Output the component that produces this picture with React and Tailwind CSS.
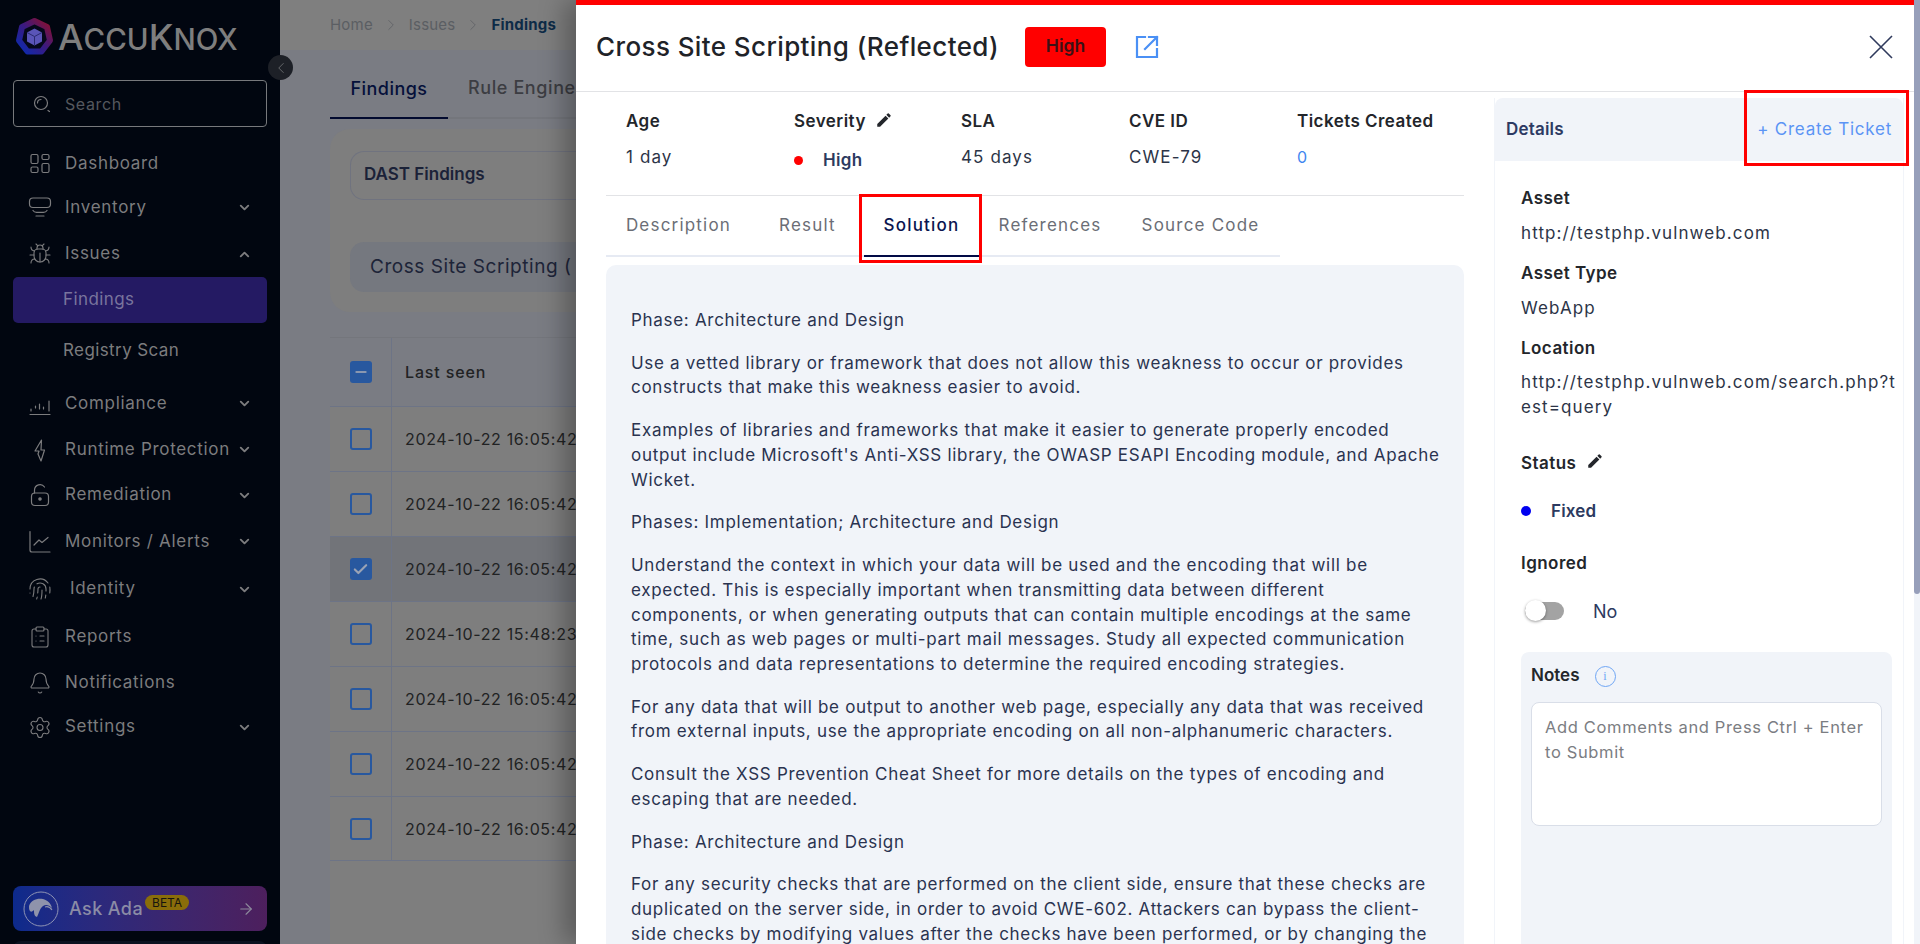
import React from "react";
import { Bug, Fingerprint, Bell, Settings, ClipboardList, ChevronDown, ChevronUp, ChevronLeft, ChevronRight, ArrowRight, Check, Minus } from "lucide-react";

const I = ({ children }) => (
  <svg width="24" height="24" viewBox="0 0 24 24" fill="none" stroke="currentColor" strokeWidth="1.2" strokeLinecap="round" strokeLinejoin="round">{children}</svg>
);
const DashIcon = () => <I><rect x="3" y="2.5" width="7" height="9" rx="1.5"/><rect x="14" y="2.5" width="7" height="5" rx="1.5"/><rect x="3" y="15" width="7" height="5.5" rx="1.5"/><rect x="14" y="11.5" width="7" height="9" rx="1.5"/></I>;
const InvIcon = () => <I><rect x="1.5" y="2" width="21" height="9.5" rx="3.5"/><path d="M5 14.5c.8 1.3 2 1.8 3.5 1.8h7c1.5 0 2.7-.5 3.5-1.8M8 20h8"/></I>;
const CompIcon = () => <I><path d="M2 22.5h20M3 17v2M7.5 14v2M11.5 12v5M15.5 15v2M21 9v10"/></I>;
const BoltIcon = () => <I><path d="M13.5 2 7 13h4l-1 3 3 7 3.5-11H13z"/></I>;
const LockIcon = () => <I><rect x="3.5" y="10" width="17" height="12.5" rx="3.5"/><path d="M6.5 10V7a5.5 5.5 0 0 1 10-3"/><circle cx="12" cy="16" r="1.2" fill="currentColor"/></I>;
const ChartIcon = () => <I><path d="M2 1.5V20a2 2 0 0 0 2 2h18M6 15l5-5 3 2.5 6-5"/></I>;
const EditIcon = ({ size = 18, className = "" }) => (
  <svg width={size} height={size} viewBox="0 0 24 24" fill="currentColor" className={className}><path d="M3 17.25V21h3.75L17.81 9.94l-3.75-3.75L3 17.25zM20.71 7.04c.39-.39.39-1.02 0-1.41l-2.34-2.34a.9959.9959 0 0 0-1.41 0l-1.83 1.83 3.75 3.75 1.83-1.83z" /></svg>
);
const Fold = ({ up }) => up
  ? <ChevronUp size={15} strokeWidth={3} />
  : <ChevronDown size={15} strokeWidth={3} />;

const nav = [
  { t: "Dashboard", icon: <DashIcon />, h: "h-[41px]" },
  { t: "Inventory", icon: <InvIcon />, chev: 1, h: "h-[47px]" },
  { t: "Issues", icon: <Bug size={24} strokeWidth={1.1} />, chev: 2, h: "h-[46px]" },
];
const nav2 = [
  { t: "Compliance", icon: <CompIcon />, chev: 1, h: "h-[47px]" },
  { t: "Runtime Protection", icon: <BoltIcon />, chev: 1, h: "h-[45px]" },
  { t: "Remediation", icon: <LockIcon />, chev: 1, h: "h-[46px]" },
  { t: "Monitors / Alerts", icon: <ChartIcon />, chev: 1, h: "h-[47px]" },
  { t: "Identity", icon: <Fingerprint size={26} strokeWidth={1.1} />, chev: 1, h: "h-[48px]", shift: true },
  { t: "Reports", icon: <ClipboardList size={24} strokeWidth={1.1} />, h: "h-[48px]" },
  { t: "Notifications", icon: <Bell size={24} strokeWidth={1.1} />, h: "h-[44px]" },
  { t: "Settings", icon: <Settings size={25} strokeWidth={1.1} />, chev: 1, h: "h-[44px]" },
];

const NavRow = ({ it }) => (
  <div className={`${it.h} flex items-center pl-[28px] pr-[28px] text-[#7c7c7e]`}>
    <span className="w-[24px] flex justify-center shrink-0">{it.icon}</span>
    <span className={`${it.shift ? "ml-[18px]" : "ml-[13px]"} text-[17px] tracking-[0.7px] flex-1 whitespace-nowrap`}>{it.t}</span>
    {it.chev ? <Fold up={it.chev === 2} /> : null}
  </div>
);

const rows = ["2024-10-22 16:05:42", "2024-10-22 16:05:42", "2024-10-22 16:05:42", "2024-10-22 15:48:23", "2024-10-22 16:05:42", "2024-10-22 16:05:42", "2024-10-22 16:05:42"];

const paras = [
  ["Phase: Architecture and Design"],
  ["Use a vetted library or framework that does not allow this weakness to occur or provides", "constructs that make this weakness easier to avoid."],
  ["Examples of libraries and frameworks that make it easier to generate properly encoded", "output include Microsoft's Anti-XSS library, the OWASP ESAPI Encoding module, and Apache", "Wicket."],
  ["Phases: Implementation; Architecture and Design"],
  ["Understand the context in which your data will be used and the encoding that will be", "expected. This is especially important when transmitting data between different", "components, or when generating outputs that can contain multiple encodings at the same", "time, such as web pages or multi-part mail messages. Study all expected communication", "protocols and data representations to determine the required encoding strategies."],
  ["For any data that will be output to another web page, especially any data that was received", "from external inputs, use the appropriate encoding on all non-alphanumeric characters."],
  ["Consult the XSS Prevention Cheat Sheet for more details on the types of encoding and", "escaping that are needed."],
  ["Phase: Architecture and Design"],
  ["For any security checks that are performed on the client side, ensure that these checks are", "duplicated on the server side, in order to avoid CWE-602. Attackers can bypass the client-", "side checks by modifying values after the checks have been performed, or by changing the"],
];

const Label = ({ children }) => <div className="text-[17px] font-semibold text-[#23262b] tracking-[0.45px] leading-[24px] whitespace-nowrap">{children}</div>;
const Value = ({ children }) => <div className="text-[17px] text-[#2c3447] tracking-[1.1px] leading-[25px] whitespace-nowrap">{children}</div>;

const tabs = [
  { t: "Description", w: "w-[145px]" },
  { t: "Result", w: "w-[113px]" },
  { t: "Solution", w: "w-[115px]", on: true },
  { t: "References", w: "w-[142px]" },
  { t: "Source Code", w: "w-[159px]" },
];

export default function App() {
  return (
    <div className="relative flex h-[944px] w-full overflow-hidden bg-[#7a7c83] font-['Inter','Liberation_Sans',sans-serif]">
      {/* Sidebar */}
      <aside className="w-[280px] shrink-0 h-full bg-[#010610] flex flex-col relative">
        <div className="h-[80px] flex items-center pl-[15px] pb-[6px]">
          <svg width="39" height="40" viewBox="0 0 39 40">
            <defs>
              <linearGradient id="ring" x1="0" y1="1" x2="1" y2="0">
                <stop offset="0" stopColor="#0b2bb0" />
                <stop offset="0.5" stopColor="#3a1a80" />
                <stop offset="1" stopColor="#8f0f2a" />
              </linearGradient>
            </defs>
            <path d="M19.5 4 32 10l3 13.5-8.5 11h-14L4 23.5 7 10z" fill="#05081a" stroke="url(#ring)" strokeWidth="6" strokeLinejoin="round" />
            <path d="M19.5 11.5 27 15.5v9l-7.5 4-7.5-4v-9z" fill="#5a55b8" />
            <path d="M12 15.5l7.5 4 7.5-4M19.5 19.5v9" stroke="#2a2a70" strokeWidth="1" fill="none" />
          </svg>
          <span className="ml-[4px] text-[#7e7e7e] font-medium leading-none whitespace-nowrap">
            <span className="text-[36px]">A</span><span className="text-[29.5px]">CCU</span><span className="text-[36px]">K</span><span className="text-[29.5px]">NOX</span>
          </span>
        </div>
        <div className="mx-[13px] h-[47px] shrink-0 rounded-[4px] border border-[#77797c] flex items-center pl-[18px] text-[#55585e]">
          <svg width="20" height="20" viewBox="0 0 20 20" fill="none" stroke="#7c7c7e" strokeWidth="1.2" strokeLinecap="round"><circle cx="9" cy="9" r="6.5"/><path d="M5.5 9a3.5 3.5 0 0 1 3.5-3.5M16 16.5l1.5 1"/></svg>
          <span className="ml-[13px] text-[16px] tracking-[0.6px]">Search</span>
        </div>
        <div className="mt-[16px]">
          {nav.map((it) => <NavRow key={it.t} it={it} />)}
          <div className="mx-[13px] h-[46px] rounded-[5px] bg-[#241a63] flex items-center pl-[50px] text-[17px] tracking-[0.4px] text-[#79749d]">Findings</div>
          <div className="h-[55px] flex items-center pl-[63px] text-[17px] tracking-[0.4px] text-[#7c7c7e]">Registry Scan</div>
          <div className="mt-[2px]">
            {nav2.map((it) => <NavRow key={it.t} it={it} />)}
          </div>
        </div>
        <div className="mt-auto mb-[-17px]">
          <div className="mx-[13px] h-[45px] rounded-[8px] bg-gradient-to-r from-[#0c2a8c] to-[#4d1f5d] flex items-center pl-[10px] pr-[12px]">
            <svg width="36" height="36" viewBox="0 0 36 36" fill="none">
              <circle cx="18" cy="18" r="17" stroke="#8e93b4" strokeWidth="1" />
              <path d="M6 15c2-6 8-8 14-7 4 1 8 4 9 9-3-3-6-4-9-2-3 2-4 7-6 11-3-1-3-4-3-7-2 2-3 2-4 1-1-1-1-3-1-5z" fill="#8f93ab" />
              <path d="M22 16c3-1 5 0 7 3" stroke="#8f93ab" strokeWidth="1.2" />
            </svg>
            <span className="ml-[10px] text-[18px] font-medium tracking-[0.4px] text-[#8b8ca6] whitespace-nowrap">Ask Ada</span>
            <span className="ml-[2px] mb-[13px] h-[15px] px-[7px] rounded-full bg-[#8a6d0a] text-[#17150f] text-[12px] leading-[15px] whitespace-nowrap">BETA</span>
            <span className="ml-auto text-[#8d8a9c]"><ArrowRight size={18} strokeWidth={1.5} /></span>
          </div>
          <div className="mx-[13px] mt-[10px] h-[20px] rounded-[8px] bg-[#0b1220]" />
        </div>
        <div className="absolute left-[268px] top-[55px] w-[25px] h-[25px] rounded-full bg-[#1d2027] flex items-center justify-center text-[#6c6e72] z-10">
          <ChevronLeft size={18} strokeWidth={1.2} />
        </div>
      </aside>

      {/* Page behind the drawer */}
      <main className="flex-1 min-w-0 h-full flex flex-col">
        <div className="h-[50px] shrink-0 bg-[#7f7f7f] pl-[50px] flex items-center gap-[9px] text-[15px] tracking-[0.2px] text-[#5b5e63] whitespace-nowrap">
          <span>Home</span><ChevronRight size={18} strokeWidth={1} />
          <span>Issues</span><ChevronRight size={18} strokeWidth={1} />
          <span className="font-bold text-[#0d2b47] tracking-[0.2px]">Findings</span>
        </div>
        <div className="pl-[50px] flex-1 flex flex-col min-h-0">
          <div className="h-[69px] shrink-0 flex items-end border-b-[2px] border-[#74767c] whitespace-nowrap">
            <div className="w-[118px] h-[69px] mb-[-2px] border-b-[2px] border-[#020a2e] flex items-center justify-center text-[18px] font-medium tracking-[0.45px] text-[#05103a] pt-[10px]">Findings</div>
            <div className="ml-[20px] h-[69px] flex items-center text-[18px] font-medium tracking-[0.6px] text-[#3c3d42] pt-[10px]">Rule Engine</div>
          </div>
          <div className="mt-[10px] h-[183px] shrink-0 bg-[#7e7e7e] rounded-l-[20px] pl-[20px] pt-[22px]">
            <div className="h-[49px] rounded-l-[14px] border border-r-0 border-[#70737f] flex items-center pl-[13px] pb-[1px] text-[17px] font-semibold text-[#1b2238] whitespace-nowrap">DAST Findings</div>
            <div className="mt-[42px] h-[50px] rounded-l-[14px] bg-[#75787f] flex items-center pl-[20px] text-[19px] tracking-[0.55px] text-[#1d2438] whitespace-nowrap">Cross Site Scripting (</div>
          </div>
          <div className="mt-[25px] flex-1 bg-[#7e7e7e] text-[16px] text-[#212223] whitespace-nowrap">
            <div className="h-[69px] bg-[#7a7c83] border-t border-[#74767c] flex">
              <div className="w-[62px] border-r border-[#6d7486] flex items-center justify-center">
                <span className="w-[22px] h-[22px] rounded-[3px] bg-[#28589f] flex items-center justify-center text-[#8a97b0]"><Minus size={16} strokeWidth={3} /></span>
              </div>
              <div className="pl-[13px] flex items-center font-medium tracking-[0.85px]">Last seen</div>
            </div>
            {rows.map((r, i) => (
              <div key={i} className={`h-[65px] flex border-t border-[#6d7486] ${i === 2 ? "bg-[#727479]" : ""} ${i === 6 ? "border-b" : ""}`}>
                <div className="w-[62px] border-r border-[#6d7486] flex items-center justify-center">
                  {i === 2
                    ? <span className="w-[22px] h-[22px] rounded-[3px] bg-[#28589f] flex items-center justify-center text-[#9aa3b5]"><Check size={17} strokeWidth={3} /></span>
                    : <span className="w-[22px] h-[22px] rounded-[3px] border-[2px] border-[#28589f]" />}
                </div>
                <div className="pl-[13px] flex items-center tracking-[0.65px]">{r}</div>
              </div>
            ))}
          </div>
        </div>
      </main>

      {/* Drawer */}
      <section className="absolute left-[576px] top-0 w-[1344px] h-[944px] bg-white flex shadow-[-12px_0_24px_rgba(0,0,0,0.28)] z-20 text-[#2c3447]">
        <div className="w-[1338px] flex flex-col h-full">
          <div className="h-[5px] shrink-0 bg-[#ff0000]" />
          <header className="h-[87px] shrink-0 border-b border-[#e2e3e6] flex items-center pl-[20px] pr-[21px] pb-[3px]">
            <h1 className="w-[429px] text-[26px] font-medium tracking-[0.4px] text-[#1f2328] whitespace-nowrap">Cross Site Scripting (Reflected)</h1>
            <span className="w-[81px] h-[40px] rounded-[4px] bg-[#ff0000] flex items-center justify-center text-[17.5px] font-semibold text-[#3a1116]">High</span>
            <span className="ml-[29px] text-[#4a90f5]">
              <svg width="24" height="24" viewBox="0 0 24 24" fill="none" stroke="currentColor" strokeWidth="2.2" strokeLinecap="square"><path d="M10 2H2v20h20v-8M22 2 10 14M14 2h8v8" /></svg>
            </span>
            <span className="ml-auto text-[#2f3a5c]">
              <svg width="24" height="24" viewBox="0 0 24 24" fill="none" stroke="currentColor" strokeWidth="1.6"><path d="M1 1l22 22M23 1 1 23" /></svg>
            </span>
          </header>
          <div className="flex flex-1 min-h-0 pl-[30px]">
            <div className="w-[858px] shrink-0 flex flex-col min-h-0">
              <div className="h-[104px] shrink-0 border-b border-[#e2e3e6] pl-[20px] pt-[17px] flex">
                <div className="w-[168px]"><Label>Age</Label><div className="mt-[12px]"><Value>1 day</Value></div></div>
                <div className="w-[167px]">
                  <div className="flex items-center gap-[9px]"><Label>Severity</Label><EditIcon className="text-[#23262b] mb-[3px]" /></div>
                  <div className="mt-[15px] flex items-center">
                    <span className="w-[9px] h-[9px] rounded-full bg-[#ff0000]" />
                    <span className="ml-[20px] text-[17px] font-semibold tracking-[0.3px] leading-[24px] text-[#2c3a60]">High</span>
                  </div>
                </div>
                <div className="w-[168px]"><Label>SLA</Label><div className="mt-[12px]"><Value>45 days</Value></div></div>
                <div className="w-[168px]"><Label>CVE ID</Label><div className="mt-[12px]"><Value>CWE-79</Value></div></div>
                <div><Label>Tickets Created</Label><div className="mt-[12px] text-[16px] leading-[24px] text-[#3f86f0]">0</div></div>
              </div>
              <div className="h-[61px] shrink-0 w-[674px] flex border-b-[2px] border-[#e6eaf3]">
                {tabs.map((t) => (
                  <div key={t.t} className={`${t.w} relative flex items-center justify-center pt-[1px] text-[17px] tracking-[1.2px] whitespace-nowrap ${t.on ? "text-[#0b1550] font-medium" : "text-[#6b6e76]"}`}>
                    {t.t}
                    {t.on && <span className="absolute left-0 right-0 bottom-[-2px] h-[2px] bg-[#020a46]" />}
                    {t.on && <span className="absolute left-[-5px] right-[-3px] top-[-2px] bottom-[-8px] border-[3px] border-[#ff0000]" />}
                  </div>
                ))}
              </div>
              <div className="mt-[8px] flex-1 min-h-0 overflow-hidden rounded-t-[10px] bg-[#f1f4f9] pl-[25px] pt-[43px] text-[17px] leading-[24.6px] tracking-[0.7px] text-[#2a3350]">
                {paras.map((p, i) => (
                  <p key={i} className="mb-[18.3px] whitespace-nowrap">
                    {p.map((l, j) => <span key={j} className="block">{l}</span>)}
                  </p>
                ))}
              </div>
            </div>
            <div className="ml-[30px] w-[410px] shrink-0 flex flex-col relative min-h-0 mt-[6px] border-x border-[#f1f4f9]">
              <div className="h-[63px] shrink-0 rounded-t-[8px] bg-[#f1f4f9] flex items-center justify-between pl-[11px] pr-[11px]">
                <span className="text-[17px] font-semibold tracking-[0.2px] text-[#2d3a63]">Details</span>
                <span className="text-[17px] tracking-[0.75px] text-[#5b94f5] whitespace-nowrap">+ Create Ticket</span>
              </div>
              <span className="absolute left-[249px] top-[-8px] w-[165px] h-[76px] border-[3px] border-[#ff0000]" />
              <div className="pl-[26px] pr-[11px] pt-[25px] flex-1 min-h-0 flex flex-col">
                <Label>Asset</Label>
                <div className="mt-[11px]"><Value>http://testphp.vulnweb.com</Value></div>
                <div className="mt-[15px]"><Label>Asset Type</Label></div>
                <div className="mt-[11px]"><Value>WebApp</Value></div>
                <div className="mt-[15px]"><Label>Location</Label></div>
                <div className="mt-[10px]"><Value>http://testphp.vulnweb.com/search.php?t</Value><Value>est=query</Value></div>
                <div className="mt-[31px] flex items-center gap-[10px]"><Label>Status</Label><EditIcon className="text-[#23262b] mb-[4px]" /></div>
                <div className="mt-[24px] flex items-center">
                  <span className="w-[10px] h-[10px] rounded-full bg-[#0000f0]" />
                  <span className="ml-[20px] text-[17px] font-semibold tracking-[0.2px] leading-[24px] text-[#2c3a60]">Fixed</span>
                </div>
                <div className="mt-[28px]"><Label>Ignored</Label></div>
                <div className="mt-[24px] flex items-center h-[24px] pl-[4px]">
                  <span className="relative w-[39px] h-[18px] rounded-full bg-[#a3a3a3]">
                    <span className="absolute left-0 top-[-2px] w-[21px] h-[21px] rounded-full bg-white shadow-[0_1px_3px_rgba(0,0,0,0.4)]" />
                  </span>
                  <span className="ml-[29px] text-[18px] text-[#2c3a60]">No</span>
                </div>
                <div className="mt-[29px] flex-1 rounded-t-[8px] bg-[#f1f4f9] px-[10px] pt-[12px]">
                  <div className="flex items-center gap-[15px] h-[24px]">
                    <span className="text-[17px] font-semibold text-[#23262b]">Notes</span>
                    <span className="w-[21px] h-[21px] rounded-full border border-[#6fa6f5] flex items-center justify-center text-[12px] text-[#6fa6f5] font-['Liberation_Serif',serif]">i</span>
                  </div>
                  <div className="mt-[14px] h-[124px] rounded-[8px] border border-[#d9dee8] bg-white pl-[13px] pt-[12px] text-[16.5px] tracking-[0.65px] leading-[25px] text-[#7b7d82] whitespace-nowrap">
                    <span className="block">Add Comments and Press Ctrl + Enter</span>
                    <span className="block">to Submit</span>
                  </div>
                </div>
              </div>
            </div>
          </div>
        </div>
        <div className="w-[6px] h-full bg-[#f1f4f9]">
          <div className="w-full h-[594px] bg-[#979fba] rounded-b-[3px]" />
        </div>
      </section>
    </div>
  );
}
